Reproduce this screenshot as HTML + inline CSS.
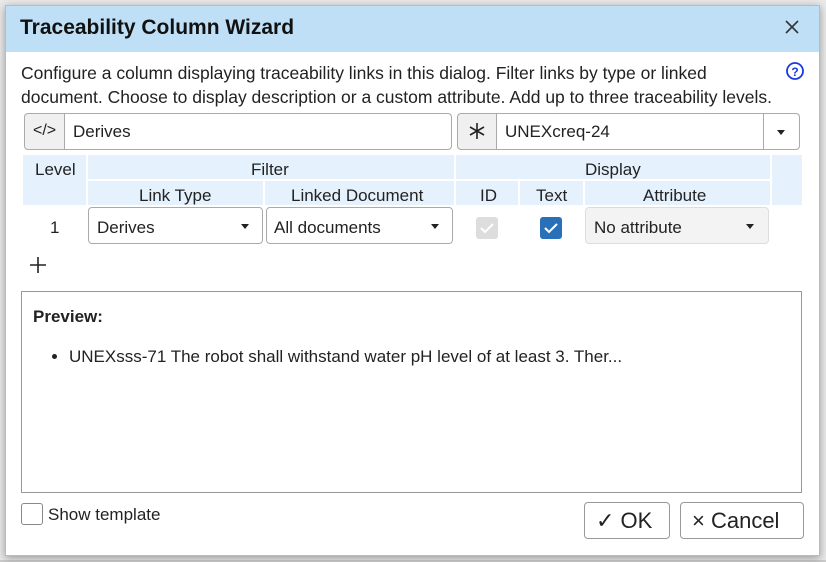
<!DOCTYPE html>
<html><head><style>
*{box-sizing:border-box;margin:0;padding:0}
body{width:826px;height:562px;background:#e9e9e9;font-family:"Liberation Sans",sans-serif;color:#222;position:relative;overflow:hidden}
.a{position:absolute}
.dlg{left:5px;top:5px;width:815px;height:551px;background:#fff;border:1px solid #bbb;box-shadow:0 2px 8px rgba(0,0,0,.35)}
.t{font-size:17px;white-space:nowrap}
.box{border:1px solid #aaa;border-radius:4px;background:#fff}
.hd{background:#e5f2fd}
.caret{width:0;height:0;border-left:4px solid transparent;border-right:4px solid transparent;border-top:5px solid #222}
</style></head><body>
<div class="a" style="left:0;top:560px;width:826px;height:2px;background:#ccc"></div>
<div class="a dlg">
<div class="a" style="left:0;top:0;width:813px;height:46px;background:#bfdff7"></div>
</div>
<div class="a t" style="left:20px;top:16px;font-size:21px;font-weight:bold;color:#111">Traceability Column Wizard</div>
<svg class="a" style="left:784px;top:19px" width="16" height="16"><path d="M2 2L14 14M14 2L2 14" stroke="#333" stroke-width="1.6"/></svg>
<div class="a t" style="left:21px;top:61px;line-height:24px;font-size:17.5px">Configure a column displaying traceability links in this dialog. Filter links by type or linked<br>document. Choose to display description or a custom attribute. Add up to three traceability levels.</div>
<svg class="a" style="left:785px;top:61px" width="20" height="20"><circle cx="10" cy="10" r="8" fill="none" stroke="#1a3ae0" stroke-width="1.8"/><text x="10" y="15" font-size="12" font-weight="bold" fill="#1a3ae0" text-anchor="middle" font-family="Liberation Sans">?</text></svg>
<div class="a box" style="left:24px;top:113px;width:428px;height:37px;background:#f0f0f0"></div>
<div class="a" style="left:64px;top:114px;width:387px;height:35px;background:#fff;border-left:1px solid #aaa;border-radius:0 4px 4px 0"></div>
<div class="a t" style="left:33px;top:122px;font-size:16px">&lt;/&gt;</div>
<div class="a t" style="left:73px;top:122px">Derives</div>
<div class="a box" style="left:457px;top:113px;width:343px;height:37px;background:#f0f0f0"></div>
<div class="a" style="left:496px;top:114px;width:303px;height:35px;background:#fff;border-left:1px solid #aaa;border-radius:0 4px 4px 0"></div>
<div class="a" style="left:763px;top:114px;width:1px;height:35px;background:#aaa"></div>
<svg class="a" style="left:468px;top:122px" width="18" height="18"><path d="M9 1V17M2 5L16 13M16 5L2 13" stroke="#222" stroke-width="1.6"/></svg>
<div class="a t" style="left:505px;top:122px">UNEXcreq-24</div>
<div class="a caret" style="left:777px;top:130px"></div>
<div class="a hd" style="left:23px;top:155px;width:63px;height:50px"></div>
<div class="a hd" style="left:88px;top:155px;width:366px;height:24px"></div>
<div class="a hd" style="left:456px;top:155px;width:314px;height:24px"></div>
<div class="a hd" style="left:772px;top:155px;width:30px;height:50px"></div>
<div class="a hd" style="left:88px;top:181px;width:175px;height:24px"></div>
<div class="a hd" style="left:265px;top:181px;width:189px;height:24px"></div>
<div class="a hd" style="left:456px;top:181px;width:62px;height:24px"></div>
<div class="a hd" style="left:520px;top:181px;width:63px;height:24px"></div>
<div class="a hd" style="left:585px;top:181px;width:185px;height:24px"></div>
<div class="a t" style="left:35px;top:160px">Level</div>
<div class="a t" style="left:251px;top:160px">Filter</div>
<div class="a t" style="left:585px;top:160px">Display</div>
<div class="a t" style="left:139px;top:186px">Link Type</div>
<div class="a t" style="left:291px;top:186px">Linked Document</div>
<div class="a t" style="left:480px;top:186px">ID</div>
<div class="a t" style="left:536px;top:186px">Text</div>
<div class="a t" style="left:643px;top:186px">Attribute</div>
<div class="a t" style="left:50px;top:218px">1</div>
<div class="a box" style="left:88px;top:207px;width:175px;height:37px"></div>
<div class="a t" style="left:97px;top:218px">Derives</div>
<div class="a caret" style="left:241px;top:224px"></div>
<div class="a box" style="left:266px;top:207px;width:187px;height:37px"></div>
<div class="a t" style="left:274px;top:218px">All documents</div>
<div class="a caret" style="left:431px;top:224px"></div>
<div class="a" style="left:476px;top:217px;width:22px;height:22px;background:#ddd;border-radius:3px"></div>
<svg class="a" style="left:476px;top:217px" width="22" height="22"><path d="M5 11L9 15L17 7" stroke="#fff" stroke-width="2" fill="none"/></svg>
<div class="a" style="left:540px;top:217px;width:22px;height:22px;background:#2a70b9;border-radius:3px"></div>
<svg class="a" style="left:540px;top:217px" width="22" height="22"><path d="M5 11L9 15L17 7" stroke="#fff" stroke-width="2" fill="none"/></svg>
<div class="a box" style="left:585px;top:207px;width:184px;height:37px;background:#f3f3f3;border-color:#ddd"></div>
<div class="a t" style="left:594px;top:218px">No attribute</div>
<div class="a caret" style="left:746px;top:224px"></div>
<svg class="a" style="left:29px;top:256px" width="18" height="18"><path d="M9 1V17M1 9H17" stroke="#222" stroke-width="1.6"/></svg>
<div class="a" style="left:21px;top:291px;width:781px;height:202px;border:1px solid #999"></div>
<div class="a t" style="left:33px;top:307px;font-weight:bold">Preview:</div>
<div class="a" style="left:52px;top:354px;width:5px;height:5px;border-radius:50%;background:#222"></div>
<div class="a t" style="left:69px;top:347px">UNEXsss-71 The robot shall withstand water pH level of at least 3. Ther...</div>
<div class="a" style="left:21px;top:503px;width:22px;height:22px;border:1px solid #888;border-radius:3px;background:#fff"></div>
<div class="a t" style="left:48px;top:505px">Show template</div>
<div class="a box" style="left:584px;top:502px;width:86px;height:37px;border-color:#999"></div>
<div class="a t" style="left:596px;top:508px;font-size:22px">✓ OK</div>
<div class="a box" style="left:680px;top:502px;width:124px;height:37px;border-color:#999"></div>
<div class="a t" style="left:692px;top:508px;font-size:22px">× Cancel</div>
</body></html>
